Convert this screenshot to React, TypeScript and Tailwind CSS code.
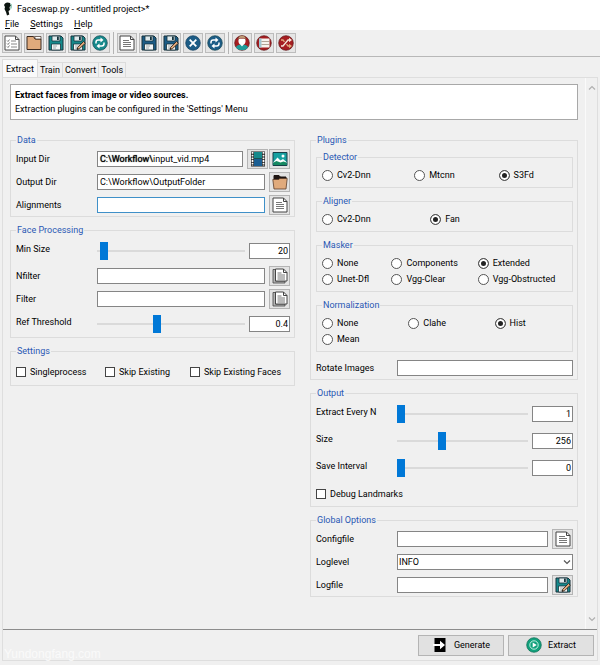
import React, { useId, useState } from "react";

const TEAL = "#16898b";
const BLUE = "#1c5c86";
const RED = "#a61e22";

function Svg({ children, size = "size-4" }: { children: React.ReactNode; size?: string }) {
  return (
    <svg viewBox="0 0 16 16" className={`${size} shrink-0`} fill="none" aria-hidden="true">
      {children}
    </svg>
  );
}

function ChecklistIcon() {
  return (
    <Svg>
      <path d="M1 1h10.5L15 4.500V15H1z" fill="#fff" stroke="#4a4a4a" />
      <path d="M11.500 1v3.500H15" stroke="#4a4a4a" />
      <path d="M3 5.500l1 1 1.500-2M3 8.500l1 1 1.500-2M3 11.500l1 1 1.500-2" stroke="#555" strokeWidth=".8" />
      <path d="M7 6h5M7 9h6M7 12h6" stroke="#888" />
    </Svg>
  );
}

function FolderIcon() {
  return (
    <Svg>
      <path d="M1 1.500h6.500L9 4h6v10.500H1z" fill="#e0aa7c" stroke="#3b2a20" />
      <path d="M8.500 1.500H15V4H9.500z" fill="#fff" stroke="#3b2a20" strokeWidth=".7" />
    </Svg>
  );
}

function OpenFolderIcon() {
  return (
    <Svg>
      <path d="M2 1.500h5l1.500 1.500H14v4H2z" fill="#1e1512" stroke="#1e1512" />
      <path d="M.8 5.500h6l1-1h7.400L14 15H2z" fill="#e0aa7c" stroke="#5a3d2b" strokeWidth=".8" />
    </Svg>
  );
}

function SaveIcon({ color, pencil = false }: { color: string; pencil?: boolean }) {
  return (
    <Svg>
      <path d="M1 1h12l2 2v12H1z" fill={color} stroke="#17333c" />
      <path d="M4 1h8v5H4z" fill="#dfeaec" stroke="#17333c" strokeWidth=".8" />
      <path d="M9 1.500h1.800v3.500H9z" fill="#17333c" />
      <path d="M3.500 9h9v6h-9z" fill="#f3f6f6" stroke="#17333c" strokeWidth=".8" />
      <path d="M5 11h4M5 13h3" stroke="#8a9a9c" strokeWidth=".8" />
      {pencil && (
        <>
          <path d="M7.500 12.500l6-6 1.800 1.800-6 5.500-2.300.6z" fill="#e0aa7c" stroke="#2a1c14" strokeWidth=".8" />
          <path d="M7 14.500l1.600-.4-1.200-1.200z" fill="#111" />
        </>
      )}
    </Svg>
  );
}

function ReloadIcon({ color }: { color: string }) {
  return (
    <Svg>
      <circle cx="8" cy="8" r="7.300" fill={color} stroke="#174652" strokeWidth=".7" />
      <path d="M4 8.500V7.200Q4 5 6.200 5H9" stroke="#fff" strokeWidth="1.500" />
      <path d="M8.500 2.600L11.500 5l-3 2.400z" fill="#fff" />
      <path d="M12 7.500v1.300Q12 11 9.800 11H7" stroke="#fff" strokeWidth="1.500" />
      <path d="M7.500 13.400L4.500 11l3-2.400z" fill="#fff" />
    </Svg>
  );
}

function ClearIcon() {
  return (
    <Svg>
      <circle cx="8" cy="8" r="7.300" fill={BLUE} stroke="#143f5e" strokeWidth=".7" />
      <path d="M4.700 4.700l6.600 6.600M11.300 4.700l-6.600 6.600" stroke="#fff" strokeWidth="1.800" />
    </Svg>
  );
}

function DocumentIcon({ stacked = false }: { stacked?: boolean }) {
  return (
    <Svg>
      {stacked && <path d="M1 1.500h2.500V13H13v2H1z" fill="#b5b5b5" stroke="#444" strokeWidth=".8" />}
      <path
        d={stacked ? "M3.500 1h8L15 4.500V13H3.500z" : "M1 1h10.500L15 4.500V15H1z"}
        fill="#fff"
        stroke="#444"
      />
      <path d="M11.500 1v3.500H15" stroke="#444" />
      <path
        d={stacked ? "M5.500 5h4M5.500 7h7.500M5.500 9h7.500M5.500 11h7.500" : "M4 5.500h6M4 7.500h8M4 9.500h8M4 11.500h8"}
        stroke="#777"
      />
    </Svg>
  );
}

function PersonIcon() {
  return (
    <Svg>
      <circle cx="8" cy="8" r="7.300" fill={RED} stroke="#5d1517" strokeWidth=".7" />
      <path d="M1.800 12Q3.500 9.700 6.500 9.500h3q3 .2 4.700 2.500-2 3.300-6.200 3.300T1.800 12z" fill="#1f9c9a" />
      <path d="M4.500 3.500h7V7q-.5 2-2 2.700L8 11.500 6.500 9.700Q5 9 4.500 7z" fill="#fff" />
      <path d="M4.500 4.500Q4 1 8 .8q4 .2 3.500 3.700L10 3H6z" fill="#d9b38c" stroke="#5d3a22" strokeWidth=".5" />
    </Svg>
  );
}

function ListIcon() {
  return (
    <Svg>
      <circle cx="8" cy="8" r="7.300" fill={RED} stroke="#5d1517" strokeWidth=".7" />
      <path d="M3.500 3.500h10v9h-10z" fill="#f7f4ef" />
      <path d="M3 3.500h2.500v9H3z" fill="#9fc7d3" />
      <path d="M5.500 6.500h8M5.500 9.500h8" stroke="#a08f80" strokeWidth=".8" />
    </Svg>
  );
}

function ShuffleIcon() {
  return (
    <Svg>
      <circle cx="8" cy="8" r="7.300" fill={RED} stroke="#5d1517" strokeWidth=".7" />
      <path d="M3 11h2l5-6h1.500" stroke="#f6e8dc" strokeWidth="1.300" />
      <path d="M11 2.800L14 5l-3 2.200z" fill="#f6e8dc" />
      <path d="M3 5h2l1.500 1.800M8.500 9.200L10 11h1.500" stroke="#e0aa7c" strokeWidth="1.300" />
      <path d="M11 8.800L14 11l-3 2.200z" fill="#e0aa7c" />
    </Svg>
  );
}

function FilmIcon() {
  return (
    <Svg>
      <path d="M1 .5h14v15H1z" fill="#1c1c1c" />
      <path d="M4 1h8v6.500H4z" fill={TEAL} />
      <path d="M4 8h8v7H4z" fill="#1b5e92" />
      <path d="M2.500 1v14M13.500 1v14" stroke="#fff" strokeWidth="1.800" strokeDasharray="1.800 .9" />
    </Svg>
  );
}

function PictureIcon() {
  return (
    <Svg>
      <path d="M1 1.500h14v13H1z" fill="#16a0a0" stroke="#163f48" />
      <circle cx="11" cy="5" r="1.500" fill="#fff" />
      <path d="M1.500 11l4-4.500 3 3L11 8l3.500 3v1h-13z" fill="#fff" />
      <path d="M1.500 11.500l3-1.500 4 1.500 3-1 3 1V14h-13z" fill="#178a62" />
    </Svg>
  );
}

function GenerateIcon() {
  return (
    <Svg>
      <path d="M2.500 1h11v14h-11z" fill="#000" />
      <path d="M1 7h7V3.800L13 8l-5 4.200V9H1z" fill="#fff" />
    </Svg>
  );
}

function PlayIcon() {
  return (
    <Svg>
      <circle cx="8" cy="8" r="7.300" fill="#12a17c" stroke="#0d6b55" strokeWidth=".7" />
      <circle cx="8" cy="8" r="4.200" stroke="#e9fff8" strokeWidth=".8" />
      <path d="M6.700 5.500l4 2.500-4 2.500z" fill="#fff" />
    </Svg>
  );
}

function AppIcon() {
  return (
    <svg viewBox="0 0 12 14" className="h-[14px] w-3 shrink-0" aria-hidden="true">
      <path d="M3 1.500Q5-.2 8 1l1 3-1.500 1L8 8l-1.500 1 .8 3.500L5 13.500 4 10 2.500 7 3 5 2 3z" fill="#0c1410" />
      <path d="M8 1l2 1.500v3L8.500 8 8 5l1-1z" fill="#9bd0bd" />
    </svg>
  );
}

function Chevron({ up = false, color = "#555" }: { up?: boolean; color?: string }) {
  return (
    <svg viewBox="0 0 8 8" className="size-2" fill="none" aria-hidden="true">
      <path d={up ? "M1 5.500l3-3 3 3" : "M1 2.500l3 3 3-3"} stroke={color} strokeWidth="1.200" />
    </svg>
  );
}

function IconButton({ label, children }: { label: string; children: React.ReactNode }) {
  return (
    <button
      type="button"
      aria-label={label}
      className="flex h-5 w-[21px] shrink-0 items-center justify-center border border-[#b4b4b4] bg-[#e3e3e3]"
    >
      {children}
    </button>
  );
}

function ToolButton({ label, children }: { label: string; children: React.ReactNode }) {
  return (
    <button
      type="button"
      aria-label={label}
      className="flex size-5 items-center justify-center border border-[#bcbcbc] bg-[#e5e5e5]"
    >
      {children}
    </button>
  );
}

function Group({ title, children }: { title: string; children: React.ReactNode }) {
  return (
    <fieldset className="min-w-0 border border-[#dcdcdc] pt-px pr-1 pl-[5px]">
      <legend className="px-px leading-3 text-[#2a58b4]">{title}</legend>
      {children}
    </fieldset>
  );
}

function TextRow({
  label,
  value = "",
  focused = false,
  children,
}: {
  label: string;
  value?: string;
  focused?: boolean;
  children?: React.ReactNode;
}) {
  const id = useId();
  return (
    <div className="flex h-[23px] items-center gap-1">
      <label htmlFor={id} className="w-[77px] shrink-0">
        {label}
      </label>
      <input
        id={id}
        type="text"
        defaultValue={value}
        className={`h-4 min-w-0 flex-1 border bg-white px-[2px] outline-none ${
          focused ? "border-[#3f90c8]" : "border-[#858585]"
        }`}
      />
      {children}
    </div>
  );
}

function SliderRow({
  label,
  min,
  max,
  step = 1,
  initial,
}: {
  label: string;
  min: number;
  max: number;
  step?: number;
  initial: number;
}) {
  const id = useId();
  const [value, setValue] = useState(initial);
  return (
    <div className="flex h-[27px] items-center gap-1">
      <label htmlFor={id} className="w-[77px] shrink-0 pb-1">
        {label}
      </label>
      <input
        id={id}
        type="range"
        min={min}
        max={max}
        step={step}
        value={value}
        onChange={(e) => setValue(Number(e.target.value))}
        className="h-[18px] min-w-0 flex-1 appearance-none bg-transparent outline-none [&::-webkit-slider-runnable-track]:h-[2px] [&::-webkit-slider-runnable-track]:bg-[#dadada] [&::-webkit-slider-thumb]:-mt-2 [&::-webkit-slider-thumb]:h-[18px] [&::-webkit-slider-thumb]:w-2 [&::-webkit-slider-thumb]:appearance-none [&::-webkit-slider-thumb]:bg-[#0078d7]"
      />
      <input
        type="text"
        aria-label={`${label} value`}
        value={String(value)}
        onChange={(e) => setValue(Number(e.target.value) || min)}
        className="h-4 w-[41px] shrink-0 border border-[#858585] bg-white px-px text-right outline-none"
      />
    </div>
  );
}

function CheckOption({ label }: { label: string }) {
  return (
    <label className="flex items-center gap-1 whitespace-nowrap">
      <input
        type="checkbox"
        className="size-[10px] shrink-0 appearance-none border border-[#444] bg-white checked:bg-[#333]"
      />
      {label}
    </label>
  );
}

function RadioGroup({
  title,
  options,
  selected,
  columns,
}: {
  title: string;
  options: string[];
  selected: string;
  columns: string;
}) {
  return (
    <fieldset className="min-w-0 border border-[#dcdcdc] py-1 pl-[5px]">
      <legend className="px-px leading-3 text-[#2a58b4]">{title}</legend>
      <div className={`grid ${columns}`}>
        {options.map((option) => (
          <label key={option} className="flex h-4 items-center gap-1 whitespace-nowrap">
            <input
              type="radio"
              name={title}
              defaultChecked={option === selected}
              className="size-[11px] shrink-0 appearance-none rounded-full border border-[#555] bg-white checked:bg-[#222] checked:shadow-[inset_0_0_0_2px_#fff]"
            />
            {option}
          </label>
        ))}
      </div>
    </fieldset>
  );
}

function SelectRow({ label, options }: { label: string; options: string[] }) {
  const id = useId();
  return (
    <div className="flex h-[23px] items-center gap-1">
      <label htmlFor={id} className="w-[77px] shrink-0">
        {label}
      </label>
      <div className="relative flex min-w-0 flex-1">
        <select
          id={id}
          className="h-4 w-full appearance-none border border-[#858585] bg-white px-px leading-[14px] outline-none"
        >
          {options.map((option) => (
            <option key={option}>{option}</option>
          ))}
        </select>
        <span className="pointer-events-none absolute inset-y-0 right-[2px] flex items-center">
          <Chevron />
        </span>
      </div>
    </div>
  );
}

function InputDirRow() {
  const id = useId();
  return (
    <div className="flex h-[23px] items-center gap-1">
      <label htmlFor={id} className="w-[77px] shrink-0">
        Input Dir
      </label>
      <div className="flex h-4 min-w-0 flex-1 items-center border border-[#858585] bg-white px-[2px]">
        <span className="text-black [text-shadow:0_0_1px_#000]">C:\Workflow\</span>
        <input
          id={id}
          type="text"
          defaultValue="input_vid.mp4"
          className="h-[14px] min-w-0 flex-1 bg-transparent outline-none"
        />
      </div>
      <div className="flex gap-px">
        <IconButton label="Select video">
          <FilmIcon />
        </IconButton>
        <IconButton label="Select image folder">
          <PictureIcon />
        </IconButton>
      </div>
    </div>
  );
}

function ToolSeparator() {
  return <span className="mx-px h-[22px] w-px bg-[#b4b4b4]" />;
}

export default function App() {
  const tabs = ["Train", "Convert", "Tools"];
  return (
    <div className="flex min-h-screen flex-col bg-[#f0f0f0] pb-1 font-['Roboto','Open_Sans',sans-serif] text-[9px] leading-[14px] text-black">
      <header className="bg-white">
        <div className="flex h-[18px] items-center gap-[3px] pl-[2px]">
          <AppIcon />
          <h1>Faceswap.py - &lt;untitled project&gt;*</h1>
        </div>
        <nav className="flex h-3 items-center gap-[11px] pl-[5px] leading-3">
          {["File", "Settings", "Help"].map((item) => (
            <button key={item} type="button">
              <span className="underline">{item[0]}</span>
              {item.slice(1)}
            </button>
          ))}
        </nav>
      </header>

      <div className="flex h-[27px] items-center gap-[2px] border-b border-[#b8b8b8] px-[2px]">
        <ToolButton label="New project"><ChecklistIcon /></ToolButton>
        <ToolButton label="Open project"><FolderIcon /></ToolButton>
        <ToolButton label="Save project"><SaveIcon color={TEAL} /></ToolButton>
        <ToolButton label="Save project as"><SaveIcon color={TEAL} pencil /></ToolButton>
        <ToolButton label="Reload project"><ReloadIcon color={TEAL} /></ToolButton>
        <ToolSeparator />
        <ToolButton label="Open task"><DocumentIcon /></ToolButton>
        <ToolButton label="Save task"><SaveIcon color={BLUE} /></ToolButton>
        <ToolButton label="Save task as"><SaveIcon color={BLUE} pencil /></ToolButton>
        <ToolButton label="Clear task"><ClearIcon /></ToolButton>
        <ToolButton label="Reload task"><ReloadIcon color={BLUE} /></ToolButton>
        <ToolSeparator />
        <ToolButton label="Extract settings"><PersonIcon /></ToolButton>
        <ToolButton label="Train settings"><ListIcon /></ToolButton>
        <ToolButton label="Convert settings"><ShuffleIcon /></ToolButton>
      </div>

      <div role="tablist" className="flex h-5 items-end pl-[2px]">
        <button
          type="button"
          role="tab"
          aria-selected="true"
          className="h-[18px] border border-b-0 border-[#dcdcdc] bg-[#fafafa] px-[3px]"
        >
          Extract
        </button>
        {tabs.map((tab) => (
          <button
            key={tab}
            type="button"
            role="tab"
            aria-selected="false"
            className="h-[15px] border border-l-0 border-b-0 border-[#dcdcdc] px-[2px]"
          >
            {tab}
          </button>
        ))}
      </div>

      <main className="mx-[2px] flex flex-1 flex-col border border-t-0 border-[#dedede]">
        <div className="flex flex-1 border-t border-[#dedede]">
          <div className="min-w-0 flex-1 pt-[6px] pr-[7px] pb-[31px] pl-[7px]">
            <div className="border border-[#a8a8a8] bg-white px-1 py-[3px]">
              <p className="font-bold">Extract faces from image or video sources.</p>
              <p>Extraction plugins can be configured in the 'Settings' Menu</p>
            </div>

            <div className="mt-[14px] grid grid-cols-[285fr_268fr] gap-[15px]">
              <div className="flex min-w-0 flex-col gap-[7px]">
                <Group title="Data">
                  <InputDirRow />
                  <TextRow label="Output Dir" value="C:\Workflow\OutputFolder">
                    <IconButton label="Select output folder"><OpenFolderIcon /></IconButton>
                  </TextRow>
                  <TextRow label="Alignments" focused>
                    <IconButton label="Select alignments file"><DocumentIcon /></IconButton>
                  </TextRow>
                </Group>
                <Group title="Face Processing">
                  <SliderRow label="Min Size" min={0} max={1024} initial={20} />
                  <TextRow label="Nfilter">
                    <IconButton label="Select nfilter files"><DocumentIcon stacked /></IconButton>
                  </TextRow>
                  <TextRow label="Filter">
                    <IconButton label="Select filter files"><DocumentIcon stacked /></IconButton>
                  </TextRow>
                  <SliderRow label="Ref Threshold" min={0} max={1} step={0.01} initial={0.4} />
                </Group>
                <Group title="Settings">
                  <div className="grid h-[27px] grid-cols-[89fr_85fr_100fr] items-center">
                    <CheckOption label="Singleprocess" />
                    <CheckOption label="Skip Existing" />
                    <CheckOption label="Skip Existing Faces" />
                  </div>
                </Group>
              </div>

              <div className="flex min-w-0 flex-col gap-[7px]">
                <Group title="Plugins">
                  <div className="mb-1 flex flex-col gap-[7px] pt-1">
                    <RadioGroup
                      title="Detector"
                      options={["Cv2-Dnn", "Mtcnn", "S3Fd"]}
                      selected="S3Fd"
                      columns="grid-cols-[93fr_85fr_74fr]"
                    />
                    <RadioGroup
                      title="Aligner"
                      options={["Cv2-Dnn", "Fan"]}
                      selected="Fan"
                      columns="grid-cols-[109fr_143fr]"
                    />
                    <RadioGroup
                      title="Masker"
                      options={["None", "Components", "Extended", "Unet-Dfl", "Vgg-Clear", "Vgg-Obstructed"]}
                      selected="Extended"
                      columns="grid-cols-[70fr_87fr_95fr]"
                    />
                    <RadioGroup
                      title="Normalization"
                      options={["None", "Clahe", "Hist", "Mean"]}
                      selected="Hist"
                      columns="grid-cols-[87fr_87fr_78fr]"
                    />
                  </div>
                  <TextRow label="Rotate Images" />
                </Group>
                <Group title="Output">
                  <SliderRow label="Extract Every N" min={1} max={100} initial={1} />
                  <SliderRow label="Size" min={64} max={640} initial={256} />
                  <SliderRow label="Save Interval" min={0} max={1000} initial={0} />
                  <div className="flex h-[25px] items-center">
                    <CheckOption label="Debug Landmarks" />
                  </div>
                </Group>
                <Group title="Global Options">
                  <TextRow label="Configfile">
                    <IconButton label="Select config file"><DocumentIcon /></IconButton>
                  </TextRow>
                  <SelectRow label="Loglevel" options={["INFO", "VERBOSE", "DEBUG", "TRACE"]} />
                  <TextRow label="Logfile">
                    <IconButton label="Select log file"><SaveIcon color={TEAL} pencil /></IconButton>
                  </TextRow>
                </Group>
              </div>
            </div>
          </div>

          <div className="flex w-3 flex-col items-center justify-between border-l border-[#fafafa] py-[6px]">
            <button type="button" aria-label="Scroll up"><Chevron up color="#b0b0b0" /></button>
            <button type="button" aria-label="Scroll down"><Chevron color="#b0b0b0" /></button>
          </div>
        </div>

        <footer className="flex h-[31px] items-center justify-between border-t border-[#8c8c8c] pr-[3px] pl-px">
          <span className="self-end font-['Liberation_Sans',sans-serif] text-[12px] leading-3 text-[#fafafa]">
            Yundongfang.com
          </span>
          <div className="flex gap-1">
            <button
              type="button"
              className="flex h-[21px] w-[86px] items-center justify-center gap-[6px] border border-[#b4b4b4] bg-[#e1e1e1]"
            >
              <GenerateIcon />
              Generate
            </button>
            <button
              type="button"
              className="flex h-[21px] w-[86px] items-center justify-center gap-[6px] border border-[#b4b4b4] bg-[#e1e1e1]"
            >
              <PlayIcon />
              Extract
            </button>
          </div>
        </footer>
      </main>
    </div>
  );
}
